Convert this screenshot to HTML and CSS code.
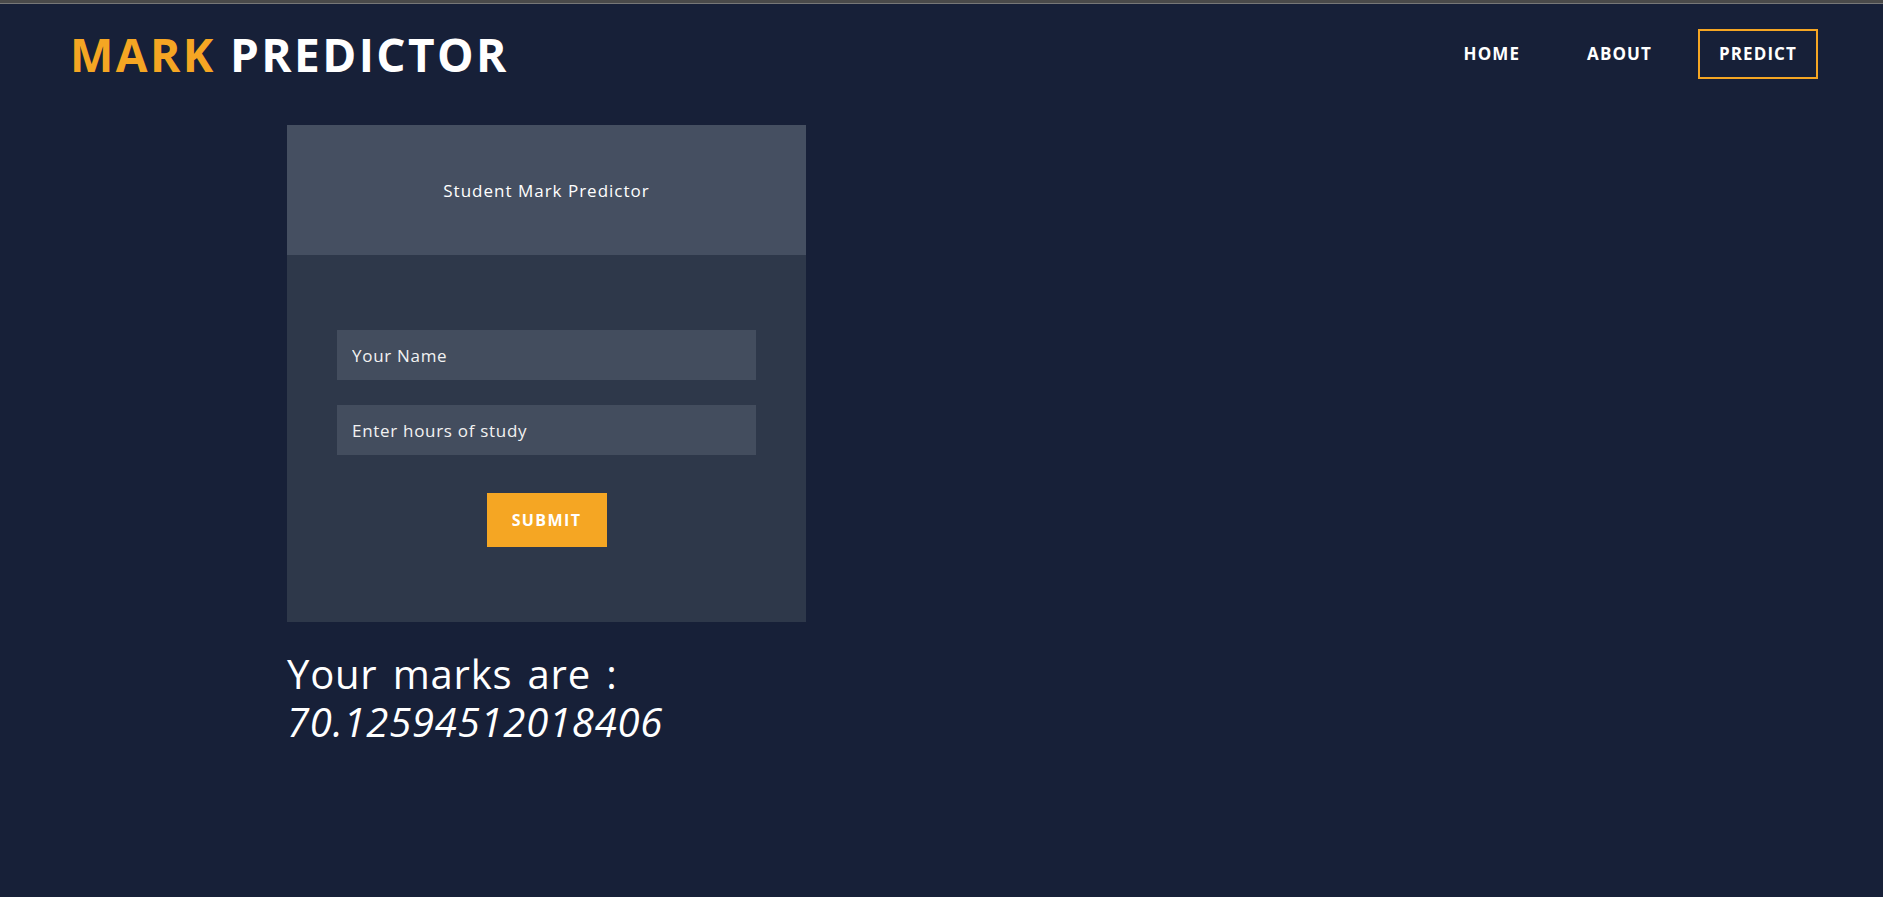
FILE: index.html
```html
<!DOCTYPE html>
<html lang="en">
<head>
<meta charset="utf-8">
<title>Mark Predictor</title>
<link rel="stylesheet" href="styles.css">
</head>
<body>
<div class="topbar"></div>
<header class="site-header">
  <div class="logo"><span class="logo-accent">MARK</span> PREDICTOR</div>
  <nav class="nav">
    <a class="nav-link" href="#">HOME</a>
    <a class="nav-link" href="#">ABOUT</a>
    <a class="nav-link nav-link-active" href="#">PREDICT</a>
  </nav>
</header>
<main class="main">
  <section class="card">
    <div class="card-head">Student Mark Predictor</div>
    <form class="card-body">
      <input class="field" type="text" placeholder="Your Name">
      <input class="field" type="text" placeholder="Enter hours of study">
      <button class="submit" type="button">SUBMIT</button>
    </form>
  </section>
  <h2 class="result"><span class="result-line">Your marks are :</span><em class="result-value">70.12594512018406</em></h2>
</main>
</body>
</html>
```
FILE: styles.css
```css
* { box-sizing: border-box; }
html, body {
  margin: 0;
  padding: 0;
  background: #172038;
  color: #ffffff;
  font-family: "Open Sans", "Noto Sans", sans-serif;
  height: 100%;
  overflow: hidden;
}
.topbar {
  height: 4px;
  background: #4a4a4a;
  border-bottom: 1px solid #777777;
}
.site-header {
  display: flex;
  align-items: center;
  justify-content: space-between;
  padding: 25px 65px 26px 70px;
}
.logo {
  font-size: 46px;
  font-weight: 700;
  line-height: 50px;
  letter-spacing: 2.4px;
}
.logo-accent { color: #f5a623; }
.nav {
  display: flex;
  align-items: center;
  gap: 25px;
}
.nav-link {
  display: block;
  color: #ffffff;
  text-decoration: none;
  font-size: 17px;
  font-weight: 700;
  line-height: 22px;
  padding: 12px 19px;
  border: 2px solid transparent;
  letter-spacing: 1.1px;
}
.nav-link-active { border-color: #f5a623; }
.main {
  padding: 20px 0 0 287px;
}
.card {
  width: 519px;
  background: #2e384a;
}
.card-head {
  height: 130px;
  background: #454f61;
  display: flex;
  align-items: center;
  justify-content: center;
  font-size: 17px;
  font-weight: 500;
  letter-spacing: 1px;
}
.card-body {
  padding: 75px 50px;
  display: flex;
  flex-direction: column;
  align-items: center;
  margin: 0;
}
.field {
  width: 100%;
  height: 50px;
  border: none;
  outline: none;
  background: #434d5e;
  color: #ffffff;
  font-family: inherit;
  font-size: 17px;
  letter-spacing: 0.7px;
  padding: 0 15px;
  margin-bottom: 25px;
}
.field::placeholder { color: #f2f2f2; opacity: 1; }
.field + .field { margin-bottom: 38px; }
.submit {
  width: 120px;
  height: 54px;
  border: none;
  background: #f5a623;
  color: #ffffff;
  font-family: inherit;
  font-size: 16px;
  font-weight: 700;
  letter-spacing: 1.4px;
  cursor: pointer;
}
.result {
  margin: 28px 0 0;
  font-size: 40px;
  font-weight: 400;
  letter-spacing: 0.8px;
}
.result-line,
.result-value {
  display: block;
  height: 48px;
  line-height: 48px;
}
.result-line { word-spacing: 4px; }
.result-value { font-style: italic; }
```
